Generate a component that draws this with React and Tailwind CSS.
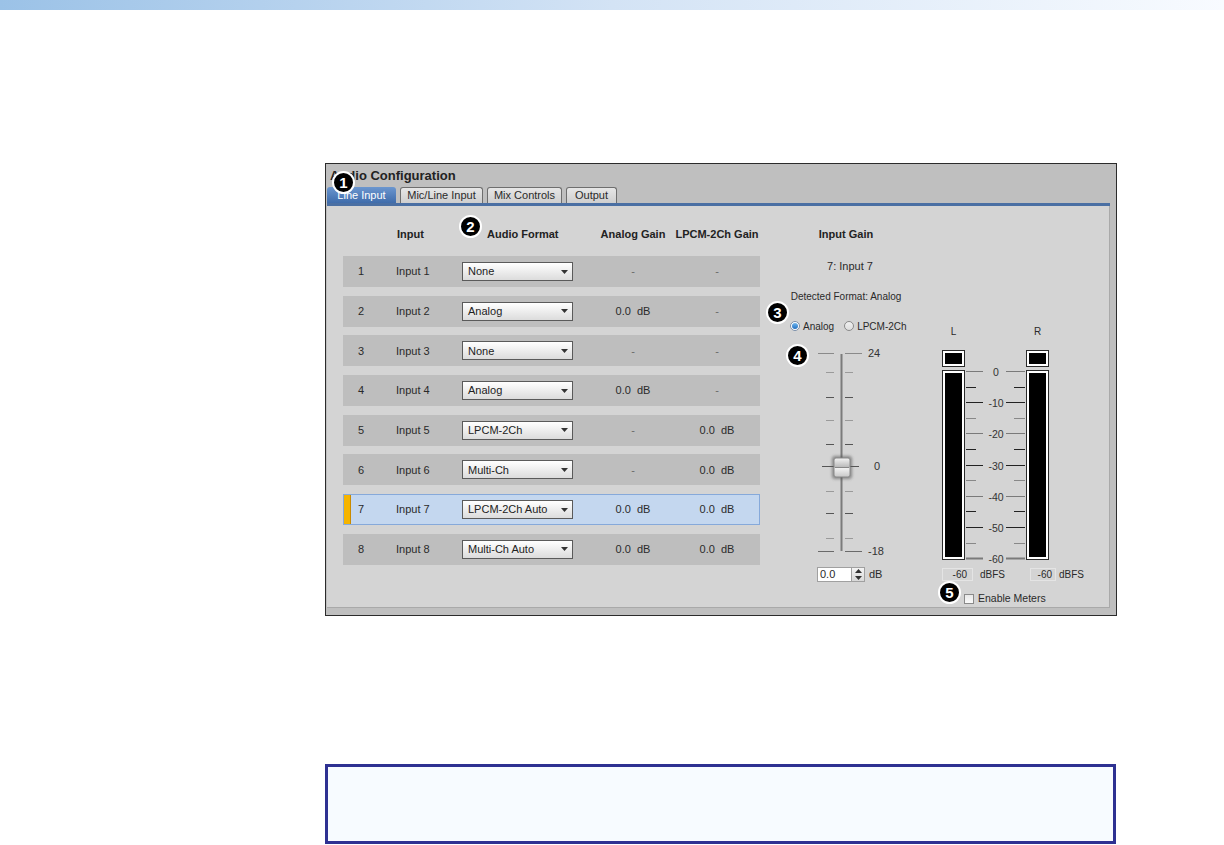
import React from 'react';

const rows = [
  { n: 1, fmt: 'None', analog: '-', lpcm: '-' },
  { n: 2, fmt: 'Analog', analog: '0.0\u00a0\u00a0dB', lpcm: '-' },
  { n: 3, fmt: 'None', analog: '-', lpcm: '-' },
  { n: 4, fmt: 'Analog', analog: '0.0\u00a0\u00a0dB', lpcm: '-' },
  { n: 5, fmt: 'LPCM-2Ch', analog: '-', lpcm: '0.0\u00a0\u00a0dB' },
  { n: 6, fmt: 'Multi-Ch', analog: '-', lpcm: '0.0\u00a0\u00a0dB' },
  { n: 7, fmt: 'LPCM-2Ch Auto', analog: '0.0\u00a0\u00a0dB', lpcm: '0.0\u00a0\u00a0dB', active: true },
  { n: 8, fmt: 'Multi-Ch Auto', analog: '0.0\u00a0\u00a0dB', lpcm: '0.0\u00a0\u00a0dB' },
];

const Badge = ({ n, className }) => (
  <div
    className={`absolute w-[23px] h-[23px] rounded-full bg-black border-2 border-white flex items-center justify-center text-white text-[15px] font-bold leading-none font-['Liberation_Sans',Arial,sans-serif] ${className}`}
  >
    {n}
  </div>
);

const Select = ({ value }) => (
  <div className="w-[111px] h-[19px] border border-[#5a5a5a] bg-gradient-to-b from-white to-[#dcdcdc] flex items-center justify-between pl-[5px] pr-[4px] text-[11px] text-[#222]">
    <span>{value}</span>
    <svg width="7" height="4" viewBox="0 0 7 4">
      <path d="M0 0 H7 L3.5 4 Z" fill="#333" />
    </svg>
  </div>
);

const Slider = () => {
  const minor = [27, 52, 75, 99, 146, 168, 193];
  return (
    <svg width="80" height="215" viewBox="0 0 80 215" className="block overflow-visible">
      <defs>
        <linearGradient id="thumb" x1="0" y1="0" x2="0" y2="1">
          <stop offset="0" stopColor="#f4f4f4" />
          <stop offset="0.45" stopColor="#bdbdbd" />
          <stop offset="0.55" stopColor="#f0f0f0" />
          <stop offset="1" stopColor="#c8c8c8" />
        </linearGradient>
        <filter id="blur" x="-50%" y="-50%" width="200%" height="200%">
          <feGaussianBlur stdDeviation="1.6" />
        </filter>
      </defs>
      <rect x="28.5" y="9" width="2" height="197" fill="#7b7b7b" />
      <line x1="6" y1="8.5" x2="22" y2="8.5" stroke="#8a8a8a" />
      <line x1="33" y1="8.5" x2="50" y2="8.5" stroke="#8a8a8a" />
      <line x1="6" y1="206.5" x2="22" y2="206.5" stroke="#6a6a6a" />
      <line x1="33" y1="206.5" x2="50" y2="206.5" stroke="#6a6a6a" />
      {minor.map((y, i) => (
        <g key={y}>
          <line x1="14" y1={y + 0.5} x2="22" y2={y + 0.5} stroke={i % 2 ? '#555' : '#9a9a9a'} />
          <line x1="33" y1={y + 0.5} x2="41" y2={y + 0.5} stroke={i % 2 ? '#555' : '#9a9a9a'} />
        </g>
      ))}
      <line x1="10" y1="121.5" x2="22" y2="121.5" stroke="#555" />
      <line x1="36" y1="121.5" x2="47" y2="121.5" stroke="#555" />
      <rect x="20" y="111" width="20" height="23" rx="3" fill="#555" opacity="0.6" filter="url(#blur)" />
      <rect x="22" y="113" width="16" height="19" rx="2" fill="url(#thumb)" stroke="#8a8a8a" />
      <line x1="23" y1="122.5" x2="37" y2="122.5" stroke="#888" />
      <text x="56" y="12" fontSize="11" fill="#333" fontFamily="Liberation Sans, Arial, sans-serif">24</text>
      <text x="62" y="125" fontSize="11" fill="#333" fontFamily="Liberation Sans, Arial, sans-serif">0</text>
      <text x="56" y="210" fontSize="11" fill="#333" fontFamily="Liberation Sans, Arial, sans-serif">-18</text>
    </svg>
  );
};

const MeterScale = () => {
  const step = 31.2;
  const labels = ['0', '-10', '-20', '-30', '-40', '-50', '-60'];
  return (
    <svg width="61" height="190" viewBox="0 0 61 190" className="block overflow-visible">
      {labels.map((l, i) => {
        const y = Math.round(1 + step * i) + 0.5;
        const c = i % 2 ? '#222' : '#7a7a7a';
        return (
          <g key={l}>
            <line x1="1" y1={y} x2="18" y2={y} stroke={c} strokeWidth={i === 6 ? 2 : 1} />
            <line x1="41" y1={y} x2="60" y2={y} stroke={c} strokeWidth={i === 6 ? 2 : 1} />
            <text x="31" y={y + 4} fontSize="10.5" textAnchor="middle" fill="#333" fontFamily="Liberation Sans, Arial, sans-serif">{l}</text>
          </g>
        );
      })}
      {labels.slice(0, 6).map((l, i) => {
        const y = Math.round(1 + step * i + step / 2) + 0.5;
        const c = i % 2 ? '#888' : '#222';
        return (
          <g key={'m' + l}>
            <line x1="1" y1={y} x2="11" y2={y} stroke={c} />
            <line x1="49" y1={y} x2="60" y2={y} stroke={c} />
          </g>
        );
      })}
    </svg>
  );
};

const Bar = ({ h }) => (
  <div className={`w-[23px] ${h} border border-[#2a2a2a] bg-white p-[2px]`}>
    <div className="w-full h-full bg-black" />
  </div>
);

export default function App() {
  return (
    <div className="relative w-[1224px] h-[845px] bg-white overflow-hidden font-['Liberation_Sans',Arial,sans-serif] text-[#2a2a2a]">
      <div className="h-[10px] bg-gradient-to-r from-[#9bc2e7] via-[#d3e3f5] to-[#f8fbff]" />

      {/* screenshot frame */}
      <div className="ml-[325px] mt-[153px] w-[792px] h-[453px] border border-[#2b2b2b] bg-[#bfbfbf] flex flex-col">
        <div className="h-[23px] pl-[4px] flex items-center text-[13px] font-bold text-[#222]">Audio Configuration</div>
        <div className="h-[16px] flex items-end gap-[4px] pl-[1px] text-[11px]">
          <div className="w-[69px] h-[16px] rounded-t-[3px] bg-gradient-to-b from-[#6b96cf] to-[#3f6cab] text-white flex items-center justify-center">Line Input</div>
          <div className="w-[83px] h-[16px] rounded-t-[3px] border border-b-0 border-[#6e6e6e] bg-gradient-to-b from-[#e6e6e6] to-[#cfcfcf] flex items-center justify-center">Mic/Line Input</div>
          <div className="w-[75px] h-[16px] rounded-t-[3px] border border-b-0 border-[#6e6e6e] bg-gradient-to-b from-[#e6e6e6] to-[#cfcfcf] flex items-center justify-center">Mix Controls</div>
          <div className="w-[51px] h-[16px] rounded-t-[3px] border border-b-0 border-[#6e6e6e] bg-gradient-to-b from-[#e6e6e6] to-[#cfcfcf] flex items-center justify-center">Output</div>
        </div>
        <div className="ml-[1px] mr-[6px] h-[3px] bg-[#4a6fa3]" />
        <div className="ml-[1px] mr-[6px] h-[402px] bg-[#d4d4d4] border-r border-b border-[#a9a9a9] flex text-[11px]">
          {/* table */}
          <div className="ml-[16px] w-[417px] pt-[20px] flex flex-col">
            <div className="h-[16px] flex items-center font-bold text-[#222]">
              <div className="w-[53px]" />
              <div className="w-[66px] pl-[1px]">Input</div>
              <div className="w-[111px] pl-[25px]">Audio Format</div>
              <div className="w-[120px] text-center">Analog Gain</div>
              <div className="w-[48px] flex justify-center whitespace-nowrap">LPCM-2Ch Gain</div>
            </div>
            <div className="mt-[14px] flex flex-col gap-[8.7px]">
              {rows.map((r) => (
                <div
                  key={r.n}
                  className={`h-[31px] flex items-center ${r.active ? 'bg-[#c4d7ef] border border-[#86a9da]' : 'bg-[#bebebe]'}`}
                >
                  {r.active ? (
                    <div className="w-[7px] h-full bg-[#f5b400] border-r border-[#c98a00] shrink-0" />
                  ) : null}
                  <div className={r.active ? 'w-[45px] pl-[7px]' : 'w-[53px] pl-[15px]'}>{r.n}</div>
                  <div className="w-[66px]">Input {r.n}</div>
                  <Select value={r.fmt} />
                  <div className={`w-[120px] text-center ${r.analog === '-' ? 'text-[#6a6a6a]' : ''}`}>{r.analog}</div>
                  <div className={`w-[48px] text-center whitespace-nowrap ${r.lpcm === '-' ? 'text-[#6a6a6a]' : ''}`}>{r.lpcm}</div>
                </div>
              ))}
            </div>
          </div>

          {/* input gain */}
          <div className="ml-[20px] w-[130px] pt-[20px] flex flex-col">
            <div className="h-[16px] flex items-center justify-center font-bold text-[#222] pl-[2px]">Input Gain</div>
            <div className="mt-[16px] h-[16px] flex items-center justify-center pl-[10px]">7: Input 7</div>
            <div className="mt-[14px] h-[16px] flex items-center justify-center pl-[2px] whitespace-nowrap text-[10px]">Detected Format: Analog</div>
            <div className="mt-[14px] h-[16px] flex items-center pl-[10px] gap-[2px] whitespace-nowrap text-[10px]">
              <span className="w-[10px] h-[10px] rounded-full border border-[#7a8ea8] bg-white flex items-center justify-center">
                <span className="w-[6px] h-[6px] rounded-full bg-gradient-to-b from-[#6fb6ee] to-[#1e6fc0]" />
              </span>
              <span className="ml-[1px]">Analog</span>
              <span className="ml-[8px] w-[10px] h-[10px] rounded-full border border-[#8a8a8a] bg-gradient-to-b from-[#f0f0f0] to-[#dedede]" />
              <span className="ml-[1px]">LPCM-2Ch</span>
            </div>
            <div className="mt-[11px] ml-[32px]">
              <Slider />
            </div>
            <div className="mt-[6px] ml-[37px] flex items-center">
              <div className="w-[35px] h-[15px] border border-[#a0a0a0] bg-white text-[11px] pl-[2px] flex items-center">0.0</div>
              <div className="w-[13px] h-[15px] border border-l-0 border-[#a0a0a0] bg-gradient-to-b from-[#f4f4f4] to-[#d8d8d8] flex flex-col items-center justify-around">
                <svg width="7" height="4" viewBox="0 0 7 4"><path d="M0 4 H7 L3.5 0 Z" fill="#333" /></svg>
                <svg width="7" height="4" viewBox="0 0 7 4"><path d="M0 0 H7 L3.5 4 Z" fill="#333" /></svg>
              </div>
              <span className="ml-[4px]">dB</span>
            </div>
          </div>

          {/* meters */}
          <div className="ml-[32px] w-[150px] pt-[117px] flex flex-col">
            <div className="h-[16px] flex items-center text-[10px]">
              <div className="w-[23px] text-center">L</div>
              <div className="w-[61px]" />
              <div className="w-[23px] text-center">R</div>
            </div>
            <div className="mt-[11px] flex">
              <Bar h="h-[17px]" />
              <div className="w-[61px]" />
              <Bar h="h-[17px]" />
            </div>
            <div className="mt-[3px] flex">
              <Bar h="h-[190px]" />
              <MeterScale />
              <Bar h="h-[190px]" />
            </div>
            <div className="mt-[8px] h-[13px] flex items-center text-[10px]">
              <div className="w-[31px] h-[13px] border border-[#e4e4e4] flex items-center justify-end pr-[5px]">-60</div>
              <span className="ml-[7px]">dBFS</span>
              <div className="ml-[25px] w-[26px] h-[13px] border border-[#e4e4e4] flex items-center justify-end pr-[3px]">-60</div>
              <span className="ml-[3px]">dBFS</span>
            </div>
            <div className="mt-[12px] ml-[22px] h-[11px] flex items-center gap-[4px] text-[10.5px]">
              <span className="w-[10px] h-[10px] border border-[#8a8a8a] bg-gradient-to-b from-[#e8e8e8] to-[#fafafa]" />
              <span>Enable Meters</span>
            </div>
          </div>
        </div>
      </div>

      <div className="ml-[325px] mt-[148px] w-[791px] h-[80px] border-[3px] border-[#2e3192] bg-[#f7fbff]" />

      <Badge n="1" className="left-[332px] top-[171px]" />
      <Badge n="2" className="left-[459px] top-[215px]" />
      <Badge n="3" className="left-[766px] top-[301px]" />
      <Badge n="4" className="left-[786px] top-[344px]" />
      <Badge n="5" className="left-[938px] top-[581px]" />
    </div>
  );
}
